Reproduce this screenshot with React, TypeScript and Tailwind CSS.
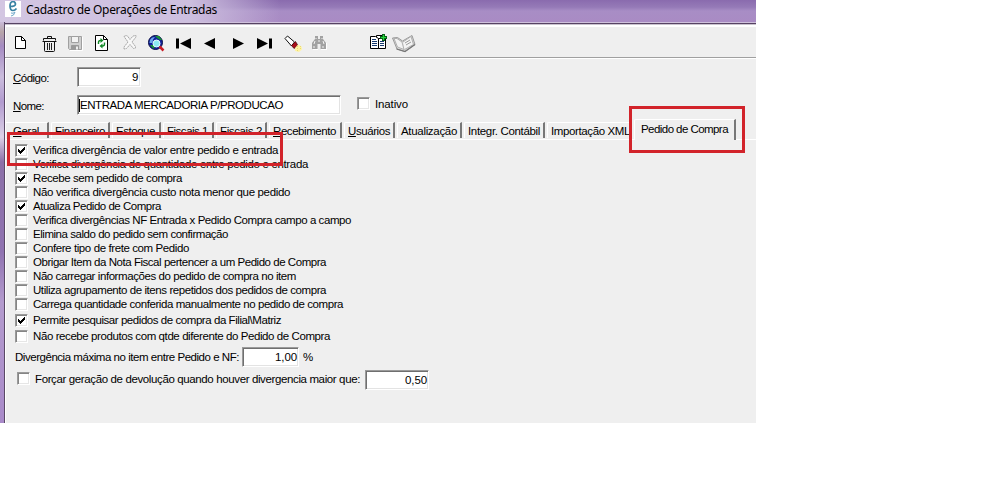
import { useLayoutEffect, useRef, type ReactNode } from 'react';

/** Single-line label whose letter spacing is adjusted to fill a given width. */
function Label({ text, w, accel = false, className = '' }: { text: string; w: number; accel?: boolean; className?: string }) {
  const ref = useRef<HTMLSpanElement>(null);
  useLayoutEffect(() => {
    const el = ref.current;
    if (!el) return;
    el.style.letterSpacing = '0px';
    const natural = el.getBoundingClientRect().width;
    el.style.letterSpacing = `${(w - natural) / text.length}px`;
  }, [text, w]);
  return (
    <span ref={ref} className={`inline-block shrink-0 whitespace-nowrap ${className}`}>
      {accel ? <><span className="underline underline-offset-1">{text[0]}</span>{text.slice(1)}</> : text}
    </span>
  );
}

function Check({ on = false }: { on?: boolean }) {
  return (
    <span className="block h-[13px] w-[13px] shrink-0 border border-b-white border-l-[#9a9a9a] border-r-white border-t-[#9a9a9a] bg-white shadow-[inset_1px_1px_0_#858585,inset_-1px_-1px_0_#e6e6e6]">
      {on && (
        <svg viewBox="0 0 11 11" className="block h-[11px] w-[11px]" shapeRendering="crispEdges">
          <path d="M2 4h1v1h1v1h1v-1h1v-1h1v-1h1v-1h1v3h-1v1h-1v1h-1v1h-1v1h-1v-1h-1v-1h-1z" fill="#000" />
        </svg>
      )}
    </span>
  );
}

function Field({ children, className }: { children: ReactNode; className: string }) {
  return (
    <div className={`flex h-5 shrink-0 items-center border border-b-white border-l-[#9a9a9a] border-r-white border-t-[#9a9a9a] bg-white shadow-[inset_1px_1px_0_#6f6f6f,inset_-1px_-1px_0_#e3e3e3] ${className}`}>
      {children}
    </div>
  );
}

function Icon({ className, box, children }: { className: string; box: string; children: ReactNode }) {
  return (
    <svg viewBox={box} className={`block shrink-0 ${className}`}>
      {children}
    </svg>
  );
}

function Toolbar() {
  return (
    <div className="flex h-[31px] items-start border-b border-[#a0a0a0] pt-[7px]">
      <Icon box="0 0 12 14" className="ml-[10px] mt-[2px] h-[14px] w-[12px]">
        <path d="M.5.5h6l4 4v8h-10z" fill="#fff" stroke="#000" />
        <path d="M6.500.5v4h4" fill="none" stroke="#000" />
      </Icon>
      <Icon box="0 0 15 16" className="ml-[15px] mt-[2px] h-[16px] w-[15px]">
        <path d="M5.500 2.500v-2h4v2M1.500 4.500v-2h12v2" fill="#eee" stroke="#111" />
        <path d="M0.500 5.500h14M2.500 6v8.500q0 1 1 1h8q1 0 1-1V6" fill="#eee" stroke="#111" />
        <path d="M5.500 7v7M7.500 7v7M9.500 7v7" stroke="#222" />
      </Icon>
      <Icon box="0 0 15 15" className="ml-[11px] mt-[2px] h-[15px] w-[15px]">
        <path d="M.5.5h13v13h-12l-1-1z" fill="#cfcfcf" stroke="#a0a0a0" />
        <path d="M3.500.5h7v6h-7z" fill="#f3f3f3" stroke="#a0a0a0" />
        <path d="M3.500 13.500v-4h7v4" fill="#999" stroke="#999" />
        <path d="M8 10.500h2v3H8z" fill="#eee" />
        <path d="M14.500 1v13.500H2" fill="none" stroke="#fff" />
      </Icon>
      <Icon box="0 0 14 17" className="ml-[12px] mt-[1px] h-[17px] w-[14px]">
        <path d="M.5.5h8l4 4v11h-12z" fill="#fff" stroke="#000" />
        <path d="M8.500.5v4h4" fill="none" stroke="#000" />
        <path d="M3.500 9V7.500q0-2 2-2H6M9.500 7.500V9q0 2-2 2H7" fill="none" stroke="#138a28" strokeWidth="1.400" />
        <path d="M5.500 3v5l3-2.500zM7.500 8.500v5L4.500 11z" fill="#138a28" />
      </Icon>
      <Icon box="0 0 14 15" className="ml-[14px] mt-[1px] h-[15px] w-[14px]">
        <path d="M1 1.500L3 .5 4.500 1 7 4.500 10 1l3-.5v1.500L9 7l3.500 4.500v1.500l-2 .5L7 9.500 3.500 13.500l-2.500.5V12L5 7z" fill="#f8f8f8" stroke="#a8a8a8" strokeDasharray="2 .5" />
      </Icon>
      <Icon box="0 0 17 17" className="ml-[11px] mt-[1px] h-[17px] w-[17px]">
        <circle cx="7.500" cy="7.500" r="7" fill="#11219b" stroke="#080c45" />
        <path d="M7 1l4 0 3 4-2 0-3-2zM2 10l3 0 2 3-2 .5z" fill="#169035" />
        <path d="M2 5Q3.500 2 7 2L5 4.500 4.500 8 1.500 8z" fill="#69a5e8" />
        <circle cx="8.500" cy="8.500" r="3.500" fill="#8ceaf2" stroke="#e9ffff" />
        <path d="M11.500 11.500l4 4" stroke="#c91c25" strokeWidth="2.500" />
      </Icon>
      <Icon box="0 0 16 12" className="ml-[11px] mt-[4px] h-[12px] w-[16px]">
        <path d="M0 0.500h3v10H0zM15 0v11L4 5.500z" fill="#000" />
      </Icon>
      <Icon box="0 0 12 12" className="ml-[12px] mt-[4px] h-[12px] w-[12px]">
        <path d="M11 0v11L0 5.500z" fill="#000" />
      </Icon>
      <Icon box="0 0 12 12" className="ml-[17px] mt-[4px] h-[12px] w-[12px]">
        <path d="M0 0v11l11-5.500z" fill="#000" />
      </Icon>
      <Icon box="0 0 16 12" className="ml-[12px] mt-[4px] h-[12px] w-[16px]">
        <path d="M0 0v11l11-5.500zM12 0.500h3v10h-3z" fill="#000" />
      </Icon>
      <Icon box="0 0 19 18" className="ml-[11px] mt-[1px] h-[18px] w-[19px]">
        <path d="M1 3.500L3.500 1l7 6-3 4z" fill="#fff" stroke="#111" />
        <path d="M7.500 10.500l4-4 2.500 4-4 3z" fill="#a80f1b" stroke="#3d070a" strokeWidth=".7" />
        <path d="M11 13l3-3.500 3.500 2 .5 3-3 2.500-4-1z" fill="#fff3a5" />
        <path d="M13 11.500h1m2 0h1m-4 2h1m2 0h1m-4 2h1" stroke="#e9dc72" />
      </Icon>
      <Icon box="0 0 17 14" className="ml-[8px] mt-[2px] h-[14px] w-[17px]">
        <path d="M4 0h3v3h2V0h3v3l3 4v6H9.500V8h-3v5H1V7l3-4z" fill="#a2a2a2" />
        <path d="M5 2v1M11 2v1M4 5l-1 3M8 4v2M12 5l1 3M3 10v2M12 10v2" stroke="#f3f3f3" />
        <path d="M2 13.500h5m3 0h6M15.500 7v6" stroke="#fff" />
      </Icon>
      <Icon box="0 0 18 17" className="ml-[42px] h-[17px] w-[18px]">
        <path d="M6.500 1.500h6l3 3v9h-9z" fill="#fff" stroke="#000" />
        <path d="M.5 2.500h5l3 2v10h-8zM8.500 4.500h7v10h-7z" fill="#fff" stroke="#000" />
        <path d="M2 5.500h4M2 7.500h5M2 9.500h5M2 11.500h5M10 7.500h4M10 9.500h4M10 11.500h4" stroke="#173a70" />
        <path d="M13.500 0v7M10 3.500h7" stroke="#075c18" strokeWidth="3" />
        <path d="M13.500 1v5M11 3.500h5" stroke="#24d83a" strokeWidth="1.200" />
      </Icon>
      <Icon box="0 0 24 19" className="ml-[4px] h-[19px] w-[24px]">
        <path d="M.5 4l5-.5 5 3.500L20 1.500l3 9-10 7L5 15z" fill="#dcdcdc" stroke="#999" />
        <path d="M2 4.500l3.500 8.500 6.500 2.500-2-7.500-5-3.500zM11 8l8-5.500 2.500 8-9 5" fill="#f3f3f3" stroke="#b0b0b0" />
        <path d="M13 9l5-3M14 11l5-3" stroke="#9c9c9c" />
        <path d="M4.500 15l8.500 2.500 10-7" fill="none" stroke="#777" strokeWidth="1.300" />
      </Icon>
    </div>
  );
}

const tabs = [
  { text: 'Geral', w: 26, box: 'w-[44px]', accel: true },
  { text: 'Financeiro', w: 50, box: 'w-[61px]' },
  { text: 'Estoque', w: 39, box: 'w-[51px]' },
  { text: 'Fiscais 1', w: 41, box: 'w-[53px]' },
  { text: 'Fiscais 2', w: 42, box: 'w-[53px]' },
  { text: 'Recebimento', w: 63, box: 'w-[75px]', accel: true },
  { text: 'Usuários', w: 42, box: 'w-[53px]', accel: true },
  { text: 'Atualização', w: 56, box: 'w-[67px]' },
  { text: 'Integr. Contábil', w: 72, box: 'w-[83px]' },
  { text: 'Importação XML', w: 79, box: 'w-[87px]' },
];

const options = [
  { text: 'Verifica divergência de valor entre pedido e entrada', w: 245, on: true },
  { text: 'Verifica divergência de quantidade entre pedido e entrada', w: 275 },
  { text: 'Recebe sem pedido de compra', w: 149, on: true },
  { text: 'Não verifica divergência custo nota menor que pedido', w: 257 },
  { text: 'Atualiza Pedido de Compra', w: 128, on: true },
  { text: 'Verifica divergências NF Entrada x Pedido Compra campo a campo', w: 318 },
  { text: 'Elimina saldo do pedido sem confirmação', w: 195 },
  { text: 'Confere tipo de frete com Pedido', w: 156 },
  { text: 'Obrigar Item da Nota Fiscal pertencer a um Pedido de Compra', w: 293 },
  { text: 'Não carregar informações do pedido de compra no item', w: 263 },
  { text: 'Utiliza agrupamento de itens repetidos dos pedidos de compra', w: 293 },
  { text: 'Carrega quantidade conferida manualmente no pedido de compra', w: 310 },
  { text: 'Permite pesquisar pedidos de compra da Filial\\Matriz', w: 248, on: true, gap: 'mt-[2px]' },
  { text: 'Não recebe produtos com qtde diferente do Pedido de Compra', w: 297, gap: 'mt-[2px]' },
];

export default function App() {
  return (
    <div className="relative h-[489px] w-[995px] overflow-hidden bg-white font-['Liberation_Sans',Arial,sans-serif] text-[11.5px] leading-[14px] text-black">
      <div className="flex h-[423px] w-[756px] flex-col overflow-hidden">
        <header className="flex h-[22px] shrink-0 items-start bg-[linear-gradient(90deg,#d3c6e2_0px,#cdbfdf_190px,#bda9d400_280px),linear-gradient(180deg,#8a6bae_0%,#957ab7_32%,#a88dc5_50%,#a98bc4_100%)] pl-[5px] pt-px">
          <span className="flex h-4 w-4 items-center justify-center bg-white">
            <svg viewBox="0 0 16 16" className="h-4 w-4">
              <path d="M5 5.500q5.500 0 5.500-2.500Q10 .5 8 .5 5 1 5 5q0 4.500 3 4.500 2 0 3.500-2" fill="none" stroke="#3981a3" strokeWidth="1.700" />
              <path d="M6 12q2 1 4-1-1 4-4 4" fill="none" stroke="#72aaca" />
            </svg>
          </span>
          <Label text="Cadastro de Operações de Entradas" w={191} className="ml-[5px] font-['Noto_Sans','Open_Sans',sans-serif] text-[12px] leading-[17px]" />
        </header>
        <div className="flex min-h-0 flex-1">
          <div className="w-1 shrink-0 bg-[linear-gradient(180deg,#c9bad8_0px,#b7a5a8_10px,#a58bc2_24px,#cbbddd_55px,#b29bcf_80px,#ddd2e8_115px,#8c70a8_140px,#9073b1_230px,#b49bce_280px,#a98ac9_401px)]" />
          <div className="flex min-w-0 flex-1 flex-col border-l border-[#5a4965] bg-[#efefef] shadow-[inset_0_1px_0_#cfc1dc,inset_0_2px_0_#564263,inset_0_3px_0_#c9c3ce,inset_1px_5px_0_#fff]">
            <div className="h-[5px] shrink-0" />
            <Toolbar />
            <div className="h-px shrink-0 bg-white" />

            <div className="flex pl-2 pt-[8px]">
              <Label text="Código:" w={36} accel className="mt-[4px]" />
              <Field className="ml-[28px] w-16 justify-end pr-[2px]"><Label text="9" w={6} /></Field>
            </div>
            <div className="mt-2 flex pl-2">
              <Label text="Nome:" w={31} accel className="mt-[4px]" />
              <Field className="ml-[33px] w-[264px] pl-[1px]">
                <span className="h-[13px] w-px bg-black" />
                <Label text="ENTRADA MERCADORIA P/PRODUCAO" w={203} />
              </Field>
              <div className="ml-4 mt-[2px]"><Check /></div>
              <Label text="Inativo" w={33} className="ml-[5px] mt-[2px]" />
            </div>

            <div className="mt-1 flex h-[21px] shrink-0 items-end border-b border-white">
              {tabs.map((t) => (
                <div key={t.text} className={`flex h-[17px] shrink-0 items-start pb-px ${t.box}`}>
                  <div className={`flex h-full flex-1 rounded-tl-[2px] border-l border-t border-white pt-px ${t.text === 'Geral' ? 'pl-[7px]' : 'ml-[2px] pl-[3px]'} ${t.text === 'Importação XML' ? '' : 'border-r-2 border-r-[#777]'}`}>
                    <Label text={t.text} w={t.w} accel={t.accel} />
                  </div>
                </div>
              ))}
              <div className="-mb-px ml-[2px] h-[21px] w-[102px] shrink-0 rounded-tl-[2px] border-l border-r-2 border-t border-l-white border-r-[#777] border-t-white bg-[#efefef] pl-[6px] pt-[2px]">
                <Label text="Pedido de Compra" w={87} />
              </div>
            </div>

            <div className="flex flex-col pl-[10px] pt-[3px]">
              {options.map((o) => (
                <div key={o.text} className={`flex h-[14px] items-center ${o.gap ?? ''}`}>
                  <Check on={o.on} />
                  <Label text={o.text} w={o.w} className="ml-[5px]" />
                </div>
              ))}
            </div>
            <div className="mt-1 flex items-center pl-[10px]">
              <Label text="Divergência máxima no item entre Pedido e NF:" w={224} />
              <Field className="ml-[3px] w-[57px] justify-end pr-[1px]"><Label text="1,00" w={22} /></Field>
              <Label text="%" w={9} className="ml-1" />
            </div>
            <div className="mt-[3px] flex pl-3">
              <div className="mt-[2px]"><Check /></div>
              <Label text="Forçar geração de devolução quando houver divergencia maior que:" w={325} className="ml-[5px] mt-[2px]" />
              <Field className="ml-[5px] w-16 justify-end pr-[1px]"><Label text="0,50" w={22} /></Field>
            </div>
          </div>
        </div>
      </div>

      <div className="absolute left-[7px] top-[132px] h-[34px] w-[276px] border-[3px] border-[#d2232a]" />
      <div className="absolute left-[629px] top-[106px] h-[47px] w-[116px] border-[3px] border-[#d2232a]" />
    </div>
  );
}
